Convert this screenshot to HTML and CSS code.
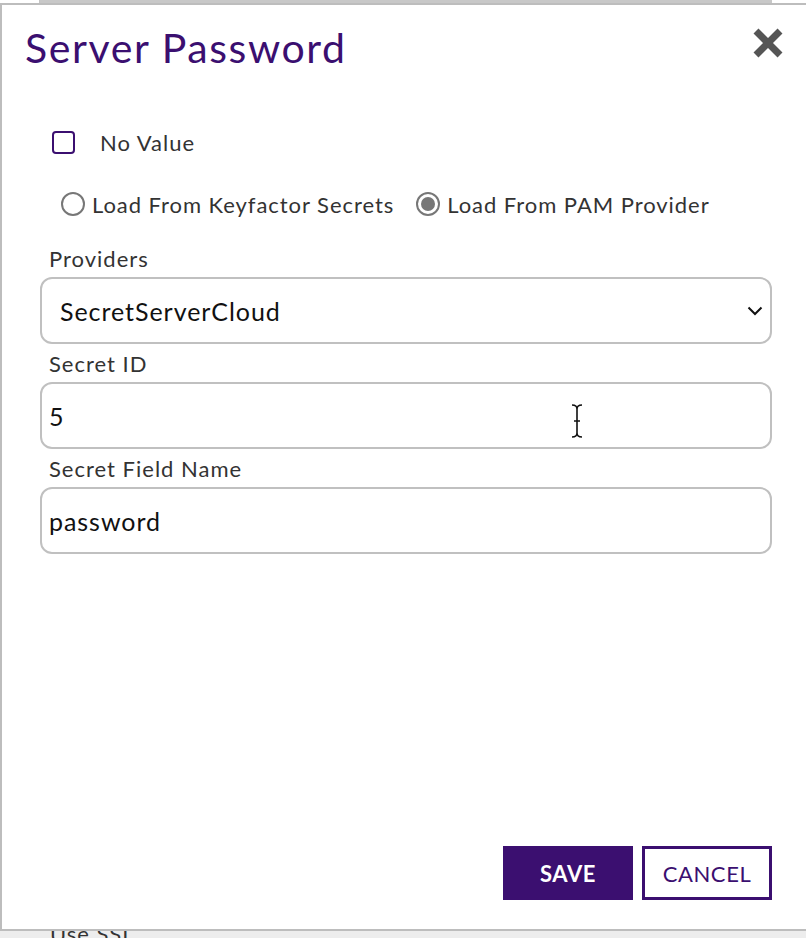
FILE: index.html
```html
<!DOCTYPE html>
<html>
<head>
<meta charset="utf-8">
<link rel="stylesheet" href="styles.css">
</head>
<body>
<div class="page">
  <div class="top-strip">
    <div class="strip-left"></div>
    <div class="strip-mid"><span class="stars">******</span></div>
    <div class="strip-right"></div>
  </div>
  <div class="ssl">Use SSL</div>
</div>
<div class="dialog">
  <div class="header">
    <h1 class="title">Server Password</h1>
    <button class="close" aria-label="Close">
      <svg width="30" height="30" viewBox="0 0 30 30"><path d="M3 3 L27 27 M27 3 L3 27" stroke="#555" stroke-width="7" stroke-linecap="butt"/></svg>
    </button>
  </div>
  <div class="body">
    <label class="check-row">
      <span class="checkbox"></span>
      <span class="check-label">No Value</span>
    </label>
    <div class="radio-row">
      <label class="radio-item"><span class="radio"></span>Load From Keyfactor Secrets</label>
      <label class="radio-item"><span class="radio checked"></span>Load From PAM Provider</label>
    </div>
    <div class="field first">
      <div class="field-label">Providers</div>
      <div class="box select">
        <span class="select-text">SecretServerCloud</span>
        <svg class="chev" width="16" height="10" viewBox="0 0 16 10"><path d="M1.5 1.5 L8 8 L14.5 1.5" fill="none" stroke="#111" stroke-width="2"/></svg>
      </div>
    </div>
    <div class="field">
      <div class="field-label">Secret ID</div>
      <div class="box input">5
        <svg class="ibeam" width="14" height="36" viewBox="0 0 14 36"><path d="M2 2 Q7 2 7 6 L7 30 Q7 34 2 34 M12 2 Q7 2 7 6 M7 30 Q7 34 12 34 M4 18 L10 18" fill="none" stroke="#111" stroke-width="1.6"/></svg>
      </div>
    </div>
    <div class="field">
      <div class="field-label">Secret Field Name</div>
      <div class="box input">password</div>
    </div>
  </div>
  <div class="footer">
    <button class="btn primary">SAVE</button>
    <button class="btn secondary">CANCEL</button>
  </div>
</div>
</body>
</html>
```

FILE: styles.css
```css
* { box-sizing: border-box; }
html, body { margin: 0; padding: 0; }
body {
  width: 806px;
  height: 938px;
  overflow: hidden;
  background: #ededed;
  font-family: "Lato", "Liberation Sans", sans-serif;
  position: relative;
}
.page {
  height: 938px;
  position: relative;
}
.top-strip {
  display: flex;
  height: 4px;
  overflow: hidden;
}
.strip-left {
  width: 40px;
  background: #fff;
  border-right: 1px solid #c4c4c4;
}
.strip-mid {
  flex: 1;
  background: #c8c8c8;
  position: relative;
}
.strip-right {
  width: 34px;
  background: #fff;
}
.stars {
  position: absolute;
  left: 12px;
  top: -13px;
  font-size: 22px;
  line-height: 1;
  color: #444;
  letter-spacing: 2px;
}
.ssl {
  position: absolute;
  left: 50px;
  top: 920px;
  font-size: 22px;
  letter-spacing: 1px;
  color: #333;
}
.dialog {
  position: absolute;
  left: 0;
  top: 3px;
  width: 808px;
  height: 928px;
  background: #fff;
  border: 2px solid #bdbdbd;
  border-right: none;
  display: flex;
  flex-direction: column;
}
.header {
  display: flex;
  justify-content: space-between;
  align-items: center;
  padding: 0 25px 0 23px;
  height: 86px;
}
.title {
  margin: 0;
  font-weight: 400;
  font-size: 41px;
  line-height: 1.2;
  color: #3b0f70;
  letter-spacing: 1.6px;
}
.close {
  border: 0;
  background: none;
  padding: 0;
  width: 30px;
  height: 30px;
  align-self: flex-start;
  margin-top: 23px;
}
.close svg { display: block; }
.body {
  padding: 0 36px 0 38px;
  flex: 1;
}
.check-row {
  display: flex;
  align-items: center;
  height: 40px;
  margin-top: 31px;
  margin-left: 12px;
}
.checkbox {
  width: 23px;
  height: 23px;
  border: 2px solid #3b0f70;
  border-radius: 4px;
}
.check-label {
  margin-left: 25px;
  font-size: 22px;
  letter-spacing: 1px;
  color: #333;
}
.radio-row {
  display: flex;
  align-items: center;
  gap: 22px;
  height: 40px;
  margin-top: 22px;
  margin-left: 21px;
}
.radio-item {
  display: flex;
  align-items: center;
  font-size: 22px;
  letter-spacing: 0.95px;
  color: #333;
}
.radio {
  width: 24px;
  height: 24px;
  border: 2px solid #777;
  border-radius: 50%;
  margin-right: 7px;
  position: relative;
}
.radio.checked::after {
  content: "";
  position: absolute;
  left: 3px; top: 3px;
  width: 14px; height: 14px;
  border-radius: 50%;
  background: #777;
}
.field.first { margin-top: 15px; }
.field-label {
  font-size: 22px;
  letter-spacing: 1px;
  color: #333;
  margin-left: 9px;
  height: 38px;
  display: flex;
  align-items: center;
}
.box {
  height: 67px;
  border: 2px solid #c0c0c0;
  border-radius: 12px;
  display: flex;
  align-items: center;
  font-size: 25px;
  letter-spacing: 0.95px;
  color: #111;
  position: relative;
}
.select { padding: 0 7px 0 18px; justify-content: space-between; }
.chev { flex: none; }
.input { padding-left: 7px; }
.ibeam {
  position: absolute;
  left: 528px;
  top: 19px;
}
.footer {
  display: flex;
  justify-content: flex-end;
  gap: 9px;
  padding: 0 36px 29px 0;
}
.btn {
  width: 130px;
  height: 54px;
  font-family: inherit;
  font-size: 22px;
  letter-spacing: 0.6px;
  cursor: pointer;
}
.primary {
  background: #3b0f70;
  color: #fff;
  border: 0;
  font-weight: 700;
}
.secondary {
  background: #fff;
  color: #3b0f70;
  border: 3px solid #3b0f70;
}
```
